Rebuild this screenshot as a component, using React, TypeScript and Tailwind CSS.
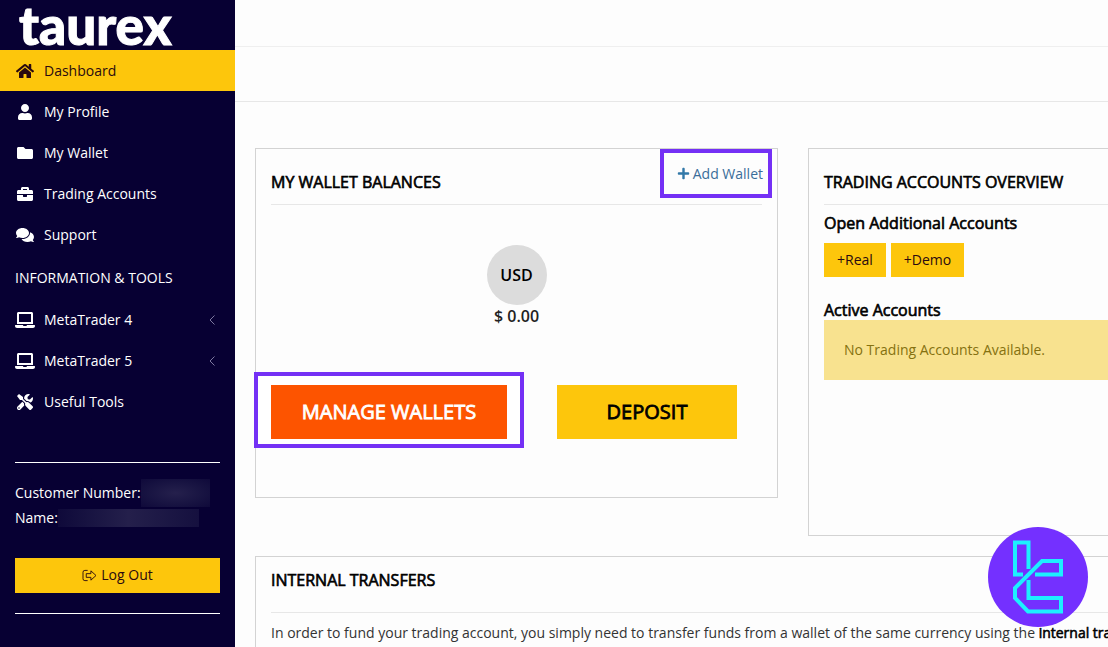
import type { ReactNode } from "react";
import type { IconType } from "react-icons";
import {
  FaBriefcase,
  FaComments,
  FaFolder,
  FaHome,
  FaLaptop,
  FaPlus,
  FaTools,
  FaUser,
} from "react-icons/fa";

interface MenuItem {
  label: string;
  icon: IconType;
  active?: boolean;
  expandable?: boolean;
}

const mainMenu: MenuItem[] = [
  { label: "Dashboard", icon: FaHome, active: true },
  { label: "My Profile", icon: FaUser },
  { label: "My Wallet", icon: FaFolder },
  { label: "Trading Accounts", icon: FaBriefcase },
  { label: "Support", icon: FaComments },
];

const toolsMenu: MenuItem[] = [
  { label: "MetaTrader 4", icon: FaLaptop, expandable: true },
  { label: "MetaTrader 5", icon: FaLaptop, expandable: true },
  { label: "Useful Tools", icon: FaTools },
];

function ArrowLeft() {
  return (
    <svg viewBox="0 0 6 10" aria-hidden="true" className="ml-auto h-[10px] w-[6px] fill-none stroke-[#7d78a0]">
      <path d="M5.500 0.500L1 5L5.500 9.500" />
    </svg>
  );
}

function Menu({ items }: { items: MenuItem[] }) {
  return (
    <ul>
      {items.map(({ label, icon: Icon, active, expandable }) => (
        <li key={label}>
          <a
            href="#"
            className={
              active
                ? "flex h-[41px] items-center bg-[#fdc60c] pr-5 pl-[15px] text-[#2a0a10]"
                : "flex h-[41px] items-center pr-5 pl-[15px] text-white hover:bg-white/10"
            }
          >
            <span className="mr-[9px] flex w-5 justify-center">
              <Icon
                aria-hidden="true"
                className={Icon === FaLaptop ? "size-5" : Icon === FaHome || Icon === FaComments ? "size-[18px]" : "size-4"}
              />
            </span>
            {label}
            {expandable && <ArrowLeft />}
          </a>
        </li>
      ))}
    </ul>
  );
}

function LogoutIcon() {
  return (
    <svg viewBox="0 0 16 14" aria-hidden="true" className="h-[13px] w-[15px] fill-none stroke-current">
      <path d="M6 1.500H3a2 2 0 0 0-2 2v7a2 2 0 0 0 2 2H6M4.500 5H9.500V2L15 7l-5.500 5V9H4.500z" strokeLinejoin="round" />
    </svg>
  );
}

function Sidebar() {
  return (
    <aside className="w-[235px] shrink-0 bg-[#070033] text-white">
      <div className="flex h-[50px] items-center pl-[19px] font-[Lato] text-[53px] leading-[64px] font-black [-webkit-text-stroke:1px_white]">
        taurex
      </div>
      <nav>
        <Menu items={mainMenu} />
        <h2 className="px-[15px] pt-[13px] pb-[11px] leading-5">INFORMATION &amp; TOOLS</h2>
        <Menu items={toolsMenu} />
      </nav>
      <div className="px-[15px] pt-10">
        <div className="border-y border-white pt-[17px] pb-5">
          <p className="flex h-[25px] items-center">
            Customer Number:
            <span className="h-7 w-[69px] bg-radial from-[#25204c] to-[#0f093a]" />
          </p>
          <p className="flex h-[25px] items-center">
            Name:
            <span className="h-[18px] w-[141px] bg-linear-to-r from-[#0f093a] via-[#241f4b] via-50% to-[#15103f]" />
          </p>
          <button
            type="button"
            className="mt-7 flex h-[35px] w-full items-center justify-center gap-1 bg-[#fdc60c] pb-px text-[#2a0a10]"
          >
            <LogoutIcon />
            Log Out
          </button>
        </div>
      </div>
    </aside>
  );
}

function Card({ title, children, className }: { title: string; children: ReactNode; className: string }) {
  return (
    <section className={`relative border border-[#d3d3d3] px-[15px] ${className}`}>
      <h2 className="border-b border-[#e7e7e7] text-base leading-6 text-black [-webkit-text-stroke:0.04em]">{title}</h2>
      {children}
    </section>
  );
}

function WalletBalances() {
  return (
    <Card title="MY WALLET BALANCES" className="h-[350px] [&>h2]:pt-[21px] [&>h2]:pb-[10px]">
      <a
        href="#"
        className="absolute top-0 right-[5px] flex h-[49px] w-28 items-center justify-end gap-[3px] border-4 border-[#7430f5] pr-[5px] text-[#3a6d9a]"
      >
        <FaPlus aria-hidden="true" className="size-[13px] text-[#3278a8]" />
        Add Wallet
      </a>
      <div className="mt-10 flex flex-col items-center text-base font-semibold">
        <div className="flex size-[60px] items-center justify-center rounded-full bg-[#dcdcdc] text-black">USD</div>
        <p className="leading-[22px] text-[#222]">$ 0.00</p>
      </div>
      <div className="mt-[58px] flex gap-[50px] text-xl">
        <div className="relative">
          <div className="absolute -top-[13px] -right-[17px] -bottom-[9px] -left-[17px] border-4 border-[#7430f5] bg-white" />
          <button
            type="button"
            className="relative h-[54px] w-[236px] bg-[#fd5400] text-white [-webkit-text-stroke:0.04em]"
          >
            MANAGE WALLETS
          </button>
        </div>
        <button type="button" className="h-[54px] w-[180px] bg-[#fdc60c] text-black [-webkit-text-stroke:0.04em]">
          DEPOSIT
        </button>
      </div>
    </Card>
  );
}

function TradingAccounts() {
  return (
    <Card title="TRADING ACCOUNTS OVERVIEW" className="h-[388px] [&>h2]:pt-[21px] [&>h2]:pb-[10px]">
      <h3 className="mt-2 text-base leading-5 text-black [-webkit-text-stroke:0.04em]">Open Additional Accounts</h3>
      <div className="mt-[10px] flex gap-[5px]">
        <button type="button" className="h-[34px] bg-[#fdc60c] px-[13px] text-[#2a0a10]">
          +Real
        </button>
        <button type="button" className="h-[34px] bg-[#fdc60c] px-[13px] text-[#2a0a10]">
          +Demo
        </button>
      </div>
      <h3 className="mt-6 text-base leading-[19px] text-black [-webkit-text-stroke:0.04em]">Active Accounts</h3>
      <p className="bg-[#f8e28f] p-5 text-[#857110]">No Trading Accounts Available.</p>
    </Card>
  );
}

function SupportBadge() {
  return (
    <svg viewBox="0 0 100 100" aria-hidden="true" className="fixed right-5 bottom-5 size-[100px]">
      <circle cx="50" cy="50" r="50" fill="#7430ff" />
      <g fill="none" stroke="#1cf0ff" strokeWidth="4">
        <path d="M35 47.500H27V15.500H40.500V42" />
        <path d="M47 47.500H73V34H54L27 61V71L40 84.500H73V71H40.500V53" />
      </g>
    </svg>
  );
}

function App() {
  return (
    <div className="flex h-screen overflow-hidden bg-[#fdfdfd] font-['Open_Sans',sans-serif] text-sm text-[#333]">
      <Sidebar />
      <div className="min-w-0 flex-1 overflow-hidden">
        <header className="border-b border-[#e7e7e7]">
          <div className="h-[47px] border-b border-[#efefef]" />
          <div className="h-[54px]" />
        </header>
        <main className="min-w-[1116px] px-5 pt-[46px]">
          <div className="grid grid-cols-2 items-start gap-[30px]">
            <WalletBalances />
            <TradingAccounts />
          </div>
          <div className="mt-5">
            <Card title="INTERNAL TRANSFERS" className="h-60 [&>h2]:pt-[11px] [&>h2]:pb-5">
              <p className="mt-[10px] leading-5">
                In order to fund your trading account, you simply need to transfer funds from a wallet of the same
                currency using the{" "}
                <strong className="font-normal text-black [-webkit-text-stroke:0.04em]">internal transfer</strong>
              </p>
            </Card>
          </div>
        </main>
      </div>
      <SupportBadge />
    </div>
  );
}

export default App;
